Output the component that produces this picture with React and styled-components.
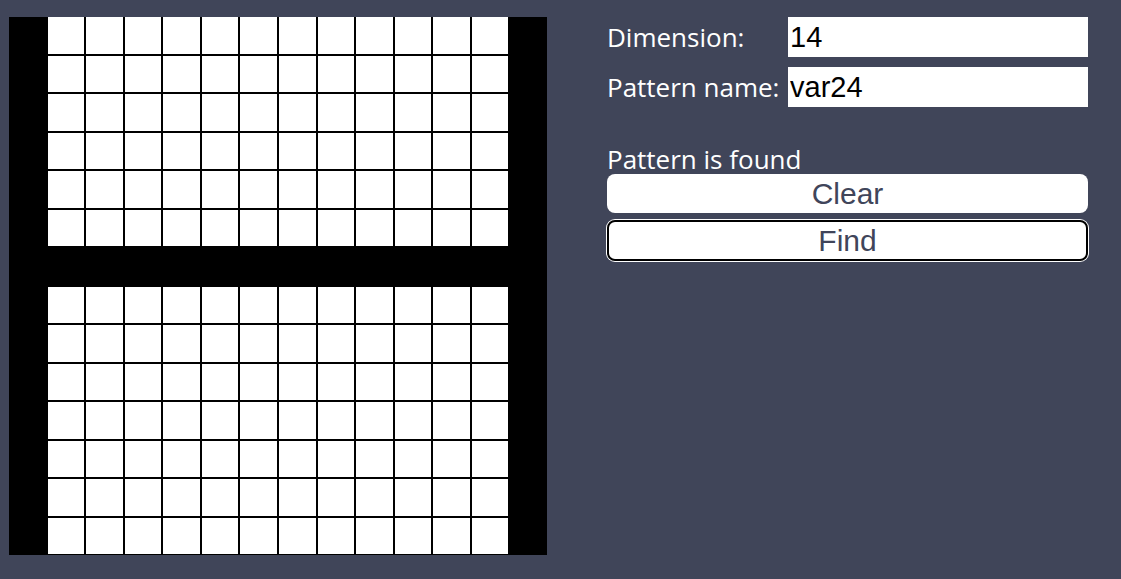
import React, { useState } from "react";
import styled, { createGlobalStyle } from "styled-components";

const GlobalStyle = createGlobalStyle`
  body {
    margin: 0;
    background-color: #404559;
    font-family: "Open Sans", sans-serif;
  }
`;

const Page = styled.div`
  display: flex;
  align-items: flex-start;
  gap: 60px;
  padding: 17px 0 0 9px;
`;

const Board = styled.div`
  display: grid;
  grid-template-columns: repeat(${(p) => p.size}, 1fr);
  grid-template-rows: repeat(${(p) => p.size}, 1fr);
  gap: 2px;
  width: 538px;
  height: 538px;
  flex-shrink: 0;
  box-sizing: border-box;
  padding-bottom: 1px;
  background-color: #000;
`;

const Cell = styled.div`
  background-color: ${(p) => (p.filled ? "#000" : "#fff")};
`;

const Panel = styled.div`
  display: flex;
  flex-direction: column;
  width: 481px;
`;

const Form = styled.div`
  display: grid;
  grid-template-columns: 173px 1fr;
  column-gap: 8px;
  row-gap: 10px;
  align-items: center;
`;

const Label = styled.label`
  color: #fff;
  font-size: 26px;
  white-space: nowrap;
`;

const Input = styled.input`
  width: 100%;
  min-width: 0;
  height: 40px;
  box-sizing: border-box;
  border: none;
  padding: 0 2px;
  font-family: "Liberation Sans", Arial, sans-serif;
  font-size: 29px;
  color: #000;
  background: #fff;
  outline: none;
`;

const Status = styled.p`
  margin: 37px 0 0;
  color: #fff;
  font-size: 26px;
  line-height: 30px;
`;

const Button = styled.button`
  height: ${(p) => (p.focused ? "41px" : "39px")};
  margin-top: ${(p) => (p.focused ? "7px" : "0")};
  box-sizing: border-box;
  border: ${(p) => (p.focused ? "2px solid #000" : "none")};
  box-shadow: ${(p) => (p.focused ? "0 0 0 1px #fff" : "none")};
  border-radius: 8px;
  background: #fff;
  color: #40455a;
  font-family: "Liberation Sans", Arial, sans-serif;
  font-size: 30px;
  padding: 0;
  cursor: pointer;
`;

const SIZE = 14;

const isFilled = (r, c) => c === 0 || c === SIZE - 1 || r === 6;

const App = () => {
  const [dimension, setDimension] = useState("14");
  const [name, setName] = useState("var24");

  const cells = [];
  for (let r = 0; r < SIZE; r++) {
    for (let c = 0; c < SIZE; c++) {
      cells.push(<Cell key={`${r}-${c}`} filled={isFilled(r, c)} />);
    }
  }

  return (
    <>
      <GlobalStyle />
      <Page>
        <Board size={SIZE}>{cells}</Board>
        <Panel>
          <Form>
            <Label htmlFor="dim">Dimension:</Label>
            <Input id="dim" value={dimension} onChange={(e) => setDimension(e.target.value)} />
            <Label htmlFor="pname">Pattern name:</Label>
            <Input id="pname" value={name} onChange={(e) => setName(e.target.value)} />
          </Form>
          <Status>Pattern is found</Status>
          <Button>Clear</Button>
          <Button focused>Find</Button>
        </Panel>
      </Page>
    </>
  );
};

export default App;
